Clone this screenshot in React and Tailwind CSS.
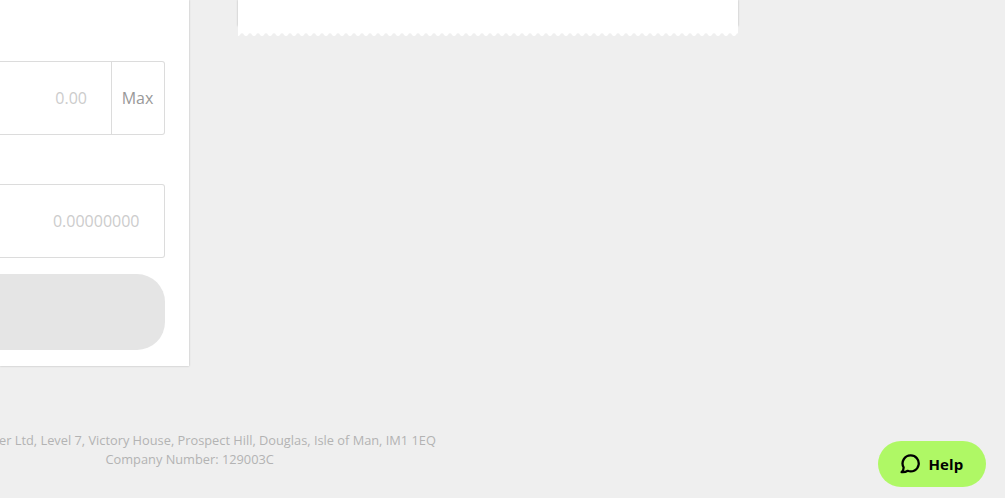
import React from 'react'

const AmountForm = () => {
  return (
    <section className="flex h-[366px] w-[189px] flex-col bg-white pr-6 pt-[61px] shadow-[0_0_2px_rgba(0,0,0,0.25)]">
      <div className="flex h-[74px] shrink-0 rounded-r-[3px] border border-l-0 border-[#dcdcdc] text-base">
        <div className="flex flex-1 items-center justify-end pr-6 text-[#cccccc]">0.00</div>
        <button className="w-[53px] border-l border-[#dcdcdc] pr-px text-[#999999]">Max</button>
      </div>
      <div className="mt-[49px] flex h-[74px] shrink-0 items-center justify-end rounded-r-[3px] border border-l-0 border-[#dcdcdc] pr-[24.5px] text-base text-[#cccccc]">
        0.00000000
      </div>
      <button aria-label="Submit" className="mt-4 h-[76px] w-full shrink-0 rounded-r-[28px] bg-[#e5e5e5]" />
    </section>
  )
}

const Receipt = () => {
  return (
    <section className="ml-[49px] flex w-[500px] flex-col">
      <div className="h-[26px] bg-white shadow-[0_0_2px_rgba(0,0,0,0.25)]" />
      {/* Torn paper edge */}
      <svg className="relative block" width="500" height="11" viewBox="0 0 500 11">
        <defs>
          <pattern id="edge" width="8" height="11" patternUnits="userSpaceOnUse">
            <path d="M0 0H8V10Q6.6 10 6 8.7Q4 6 2 8.7Q1.4 10 0 10Z" fill="#fff" />
          </pattern>
        </defs>
        <rect width="500" height="11" fill="url(#edge)" />
      </svg>
    </section>
  )
}

const HelpButton = () => {
  return (
    <button className="fixed bottom-[11px] right-[19px] flex h-[46px] w-[108px] items-center rounded-full bg-[#aff865] pl-[21.5px] text-[15px] font-bold tracking-[0.1px] text-black">
      <svg className="mr-[9px] h-5 w-5" viewBox="0 0 20 20" fill="none" stroke="currentColor" strokeWidth="2.3" strokeLinejoin="round">
        <path d="M10.6 1.4a8 8 0 1 1-2.9 15.4Q5.2 18.4 1.6 18.1Q3.8 16.6 3.6 13.3A8 8 0 0 1 10.6 1.4Z" />
      </svg>
      Help
    </button>
  )
}

export default function App() {
  return (
    <div className="flex h-[498px] w-[1005px] flex-col overflow-hidden bg-[#efefef] font-['Open_Sans',sans-serif]">
      <main className="flex items-start">
        <AmountForm />
        <Receipt />
      </main>
      <footer className="mt-[65px] flex w-[436px] flex-col text-[12.8px] leading-[19px] text-[#b3b3b3]">
        <p className="-ml-px whitespace-nowrap">er Ltd, Level 7, Victory House, Prospect Hill, Douglas, Isle of Man, IM1 1EQ</p>
        <p className="pl-[105.5px]">Company Number: 129003C</p>
      </footer>
      <HelpButton />
    </div>
  )
}
